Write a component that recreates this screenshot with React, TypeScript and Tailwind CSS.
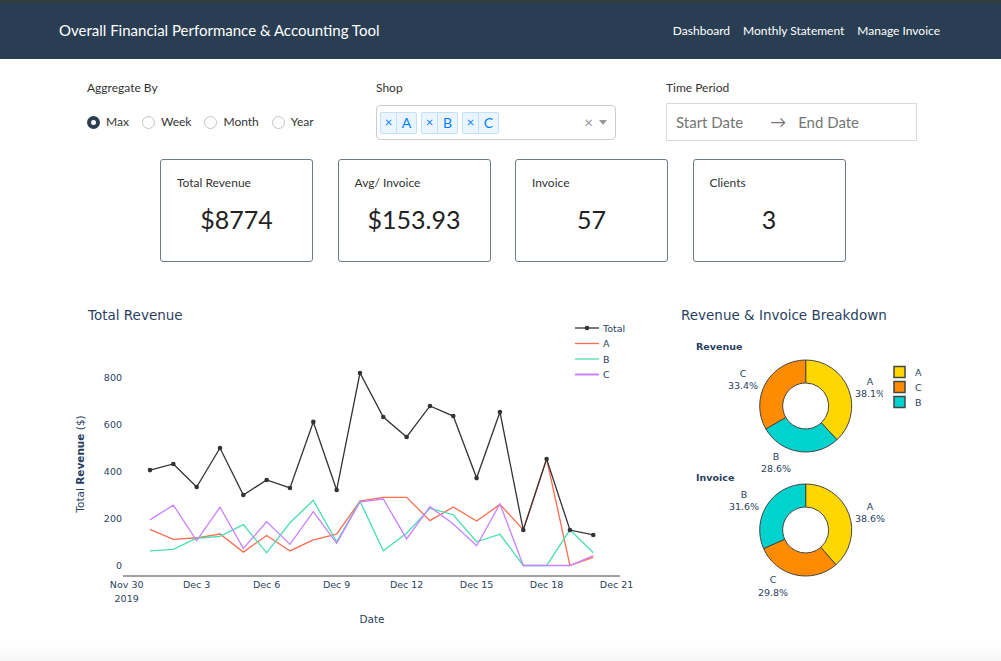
import React from 'react';

const totals = [406, 432, 334, 500, 300, 364, 330, 611, 321, 819, 632, 547, 679, 636, 372, 653, 151, 453, 151, 130];
const shopA = [154, 111, 118, 134, 57, 128, 62, 109, 133, 274, 290, 290, 191, 249, 189, 260, 152, 454, 0, 35];
const shopB = [62, 69, 116, 124, 174, 54, 182, 277, 101, 274, 63, 137, 243, 216, 101, 133, 0, 0, 152, 54];
const shopC = [194, 257, 106, 248, 73, 186, 90, 229, 94, 271, 283, 113, 250, 177, 84, 262, 0, 0, 0, 42];

const px = (i: number) => 150 + i * 23.33;
const py = (v: number) => 565.5 - v * 0.235;
const pts = (arr: number[]) => arr.map((v, i) => `${px(i)},${py(v)}`).join(' ');

const xTicks: [number, string][] = [
  [-1, 'Nov 30'],
  [2, 'Dec 3'],
  [5, 'Dec 6'],
  [8, 'Dec 9'],
  [11, 'Dec 12'],
  [14, 'Dec 15'],
  [17, 'Dec 18'],
  [20, 'Dec 21'],
];

const chartFont = '"DejaVu Sans", Verdana, sans-serif';
const ink = '#2a3f5f';

function arc(cx: number, cy: number, r: number, ri: number, a0: number, a1: number) {
  const p = (rad: number, a: number) => [cx + rad * Math.sin(a * 2 * Math.PI), cy - rad * Math.cos(a * 2 * Math.PI)];
  const large = a1 - a0 > 0.5 ? 1 : 0;
  const [x0, y0] = p(r, a0);
  const [x1, y1] = p(r, a1);
  const [x2, y2] = p(ri, a1);
  const [x3, y3] = p(ri, a0);
  return `M${x0} ${y0} A${r} ${r} 0 ${large} 1 ${x1} ${y1} L${x2} ${y2} A${ri} ${ri} 0 ${large} 0 ${x3} ${y3} Z`;
}

const GOLD = '#ffd700';
const TEAL = '#00d2cd';
const ORANGE = '#ff8c00';

function Donut({ cx, cy, slices }: { cx: number; cy: number; slices: { pct: number; color: string }[] }) {
  let acc = 0;
  return (
    <g>
      {slices.map((s, i) => {
        const a0 = acc;
        acc += s.pct / 100;
        return <path key={i} d={arc(cx, cy, 46, 23, a0, Math.min(acc, 0.99999))} fill={s.color} stroke="#444" strokeWidth={1} />;
      })}
    </g>
  );
}

function Radio({ label, checked }: { label: string; checked?: boolean }) {
  return (
    <label className="flex items-center gap-[6px] text-[12px] text-[#333]">
      {checked ? (
        <span className="w-[13px] h-[13px] rounded-full bg-[#2c3e50] flex items-center justify-center">
          <span className="w-[5px] h-[5px] rounded-full bg-white" />
        </span>
      ) : (
        <span className="w-[13px] h-[13px] rounded-full border border-[#bfc4c8] bg-white" />
      )}
      {label}
    </label>
  );
}

function Tag({ label }: { label: string }) {
  return (
    <span className="flex h-[22px] border border-[#c2e0ff] bg-[#ebf5ff] rounded-[2px] text-[#007eff]">
      <span className="w-[16px] flex items-center justify-center text-[13px] border-r border-[#c2e0ff]">×</span>
      <span className="w-[19px] flex items-center justify-center text-[14px]">{label}</span>
    </span>
  );
}

function Card({ label, value }: { label: string; value: string }) {
  return (
    <div className="w-[153px] h-[103px] border border-[#6e7c84] rounded-[3px] px-[16px] pt-[15px] flex flex-col">
      <div className="text-[12px] leading-[16px] text-[#333]">{label}</div>
      <div className="mt-[13px] text-center text-[25px] leading-[30px] text-[#222]">{value}</div>
    </div>
  );
}

export default function App() {
  return (
    <div className="min-h-screen w-full bg-white flex flex-col font-['Lato','Open_Sans',sans-serif]">
      <div className="h-[2px] bg-[#3a3a3a]" />
      <header className="h-[57px] bg-[#2a3e53] flex items-center justify-between pl-[59px] pr-[61px] text-white">
        <div className="text-[15px]">Overall Financial Performance &amp; Accounting Tool</div>
        <nav className="flex gap-[13px] text-[12px]">
          <span>Dashboard</span>
          <span>Monthly Statement</span>
          <span>Manage Invoice</span>
        </nav>
      </header>

      <section className="h-[100px] pt-[21px] pl-[87px] flex">
        <div className="w-[289px] flex flex-col">
          <div className="text-[12px] leading-[16px] text-[#333]">Aggregate By</div>
          <div className="mt-[17px] flex items-center gap-[13px]">
            <Radio label="Max" checked />
            <Radio label="Week" />
            <Radio label="Month" />
            <Radio label="Year" />
          </div>
        </div>
        <div className="w-[290px] flex flex-col">
          <div className="text-[12px] leading-[16px] text-[#333]">Shop</div>
          <div className="mt-[9px] w-[240px] h-[35px] border border-[#ccc] rounded-[4px] flex items-center pl-[3px] pr-[8px]">
            <div className="flex gap-[4px] flex-1">
              <Tag label="A" />
              <Tag label="B" />
              <Tag label="C" />
            </div>
            <span className="text-[#999] text-[15px] mr-[6px]">×</span>
            <span className="w-0 h-0 border-l-[4px] border-r-[4px] border-t-[5px] border-l-transparent border-r-transparent border-t-[#999]" />
          </div>
        </div>
        <div className="w-[251px] flex flex-col">
          <div className="text-[12px] leading-[16px] text-[#333]">Time Period</div>
          <div className="mt-[7px] h-[38px] border border-[#dbdbdb] flex items-center pl-[9px] text-[15px] text-[#757575]">
            <span>Start Date</span>
            <span className="ml-[27px] mr-[12px] text-[16px]">→</span>
            <span>End Date</span>
          </div>
        </div>
      </section>

      <section className="pl-[160px] flex gap-[24.5px]">
        <Card label="Total Revenue" value="$8774" />
        <Card label="Avg/ Invoice" value="$153.93" />
        <Card label="Invoice" value="57" />
        <Card label="Clients" value="3" />
      </section>

      <section className="mt-[33px] pl-[60px] flex h-[350px]">
        <svg width={600} height={350} viewBox="60 295 600 350" style={{ fontFamily: chartFont }}>
          <text x={88} y={320} fontSize={13.5} fill={ink}>Total Revenue</text>

          {[0, 200, 400, 600, 800].map((v) => (
            <text key={v} x={122} y={py(v) + 3.5} fontSize={9.5} fill={ink} textAnchor="end">{v}</text>
          ))}
          <text transform="translate(84,464) rotate(-90)" fontSize={10.5} fill={ink} textAnchor="middle">
            Total <tspan fontWeight="bold">Revenue</tspan> ($)
          </text>

          <line x1={123} y1={576} x2={620} y2={576} stroke="#444" strokeWidth={1} />
          {xTicks.map(([i, l]) => (
            <text key={l} x={px(i)} y={588} fontSize={9.5} fill={ink} textAnchor="middle">{l}</text>
          ))}
          <text x={px(-1)} y={602} fontSize={9.5} fill={ink} textAnchor="middle">2019</text>
          <text x={372} y={623} fontSize={10.5} fill={ink} textAnchor="middle">Date</text>

          <polyline points={pts(shopA)} fill="none" stroke="#fa6e50" strokeWidth={1.3} />
          <polyline points={pts(shopB)} fill="none" stroke="#45e0ae" strokeWidth={1.3} />
          <polyline points={pts(shopC)} fill="none" stroke="#cc80ff" strokeWidth={1.3} />
          <polyline points={pts(totals)} fill="none" stroke="#333" strokeWidth={1.3} />
          {totals.map((v, i) => (
            <circle key={i} cx={px(i)} cy={py(v)} r={2.3} fill="#333" />
          ))}

          <g fontSize={9.5} fill={ink}>
            <line x1={575} y1={328} x2={599} y2={328} stroke="#333" strokeWidth={1.3} />
            <circle cx={587} cy={328} r={2.3} fill="#333" />
            <text x={603} y={331.5}>Total</text>
            <line x1={575} y1={343.5} x2={599} y2={343.5} stroke="#fa6e50" strokeWidth={1.3} />
            <text x={603} y={347}>A</text>
            <line x1={575} y1={359} x2={599} y2={359} stroke="#45e0ae" strokeWidth={1.3} />
            <text x={603} y={362.5}>B</text>
            <line x1={575} y1={374.5} x2={599} y2={374.5} stroke="#cc80ff" strokeWidth={2} />
            <text x={603} y={378}>C</text>
          </g>
        </svg>

        <svg width={300} height={350} viewBox="660 295 300 350" style={{ fontFamily: chartFont }}>
          <defs>
            <clipPath id="pieClip">
              <rect x={660} y={295} width={223} height={350} />
            </clipPath>
          </defs>
          <text x={681} y={320} fontSize={13.5} fill={ink}>Revenue &amp; Invoice Breakdown</text>

          <text x={696} y={350} fontSize={9.5} fontWeight="bold" fill={ink}>Revenue</text>
          <Donut cx={805.7} cy={406} slices={[{ pct: 38.1, color: GOLD }, { pct: 28.6, color: TEAL }, { pct: 33.3, color: ORANGE }]} />
          <g fontSize={9.5} fill={ink} textAnchor="middle" clipPath="url(#pieClip)">
            <text x={870} y={385}>A</text>
            <text x={870} y={397}>38.1%</text>
            <text x={743} y={377}>C</text>
            <text x={743} y={389}>33.4%</text>
            <text x={776} y={460}>B</text>
            <text x={776} y={472}>28.6%</text>
          </g>

          <text x={696} y={481} fontSize={9.5} fontWeight="bold" fill={ink}>Invoice</text>
          <Donut cx={805.7} cy={530} slices={[{ pct: 38.6, color: GOLD }, { pct: 29.8, color: ORANGE }, { pct: 31.6, color: TEAL }]} />
          <g fontSize={9.5} fill={ink} textAnchor="middle">
            <text x={870} y={510}>A</text>
            <text x={870} y={522}>38.6%</text>
            <text x={744} y={498}>B</text>
            <text x={744} y={510}>31.6%</text>
            <text x={773} y={583}>C</text>
            <text x={773} y={596}>29.8%</text>
          </g>

          <g fontSize={9.5} fill={ink}>
            <rect x={894} y={366.5} width={11} height={11} fill={GOLD} stroke="#444" strokeWidth={1.5} />
            <text x={915} y={375.5}>A</text>
            <rect x={894} y={381.5} width={11} height={11} fill={ORANGE} stroke="#444" strokeWidth={1.5} />
            <text x={915} y={390.5}>C</text>
            <rect x={894} y={396.5} width={11} height={11} fill={TEAL} stroke="#444" strokeWidth={1.5} />
            <text x={915} y={405.5}>B</text>
          </g>
        </svg>
      </section>

      <footer className="flex-1 bg-gradient-to-b from-white to-[#f6f6f6]" />
    </div>
  );
}
